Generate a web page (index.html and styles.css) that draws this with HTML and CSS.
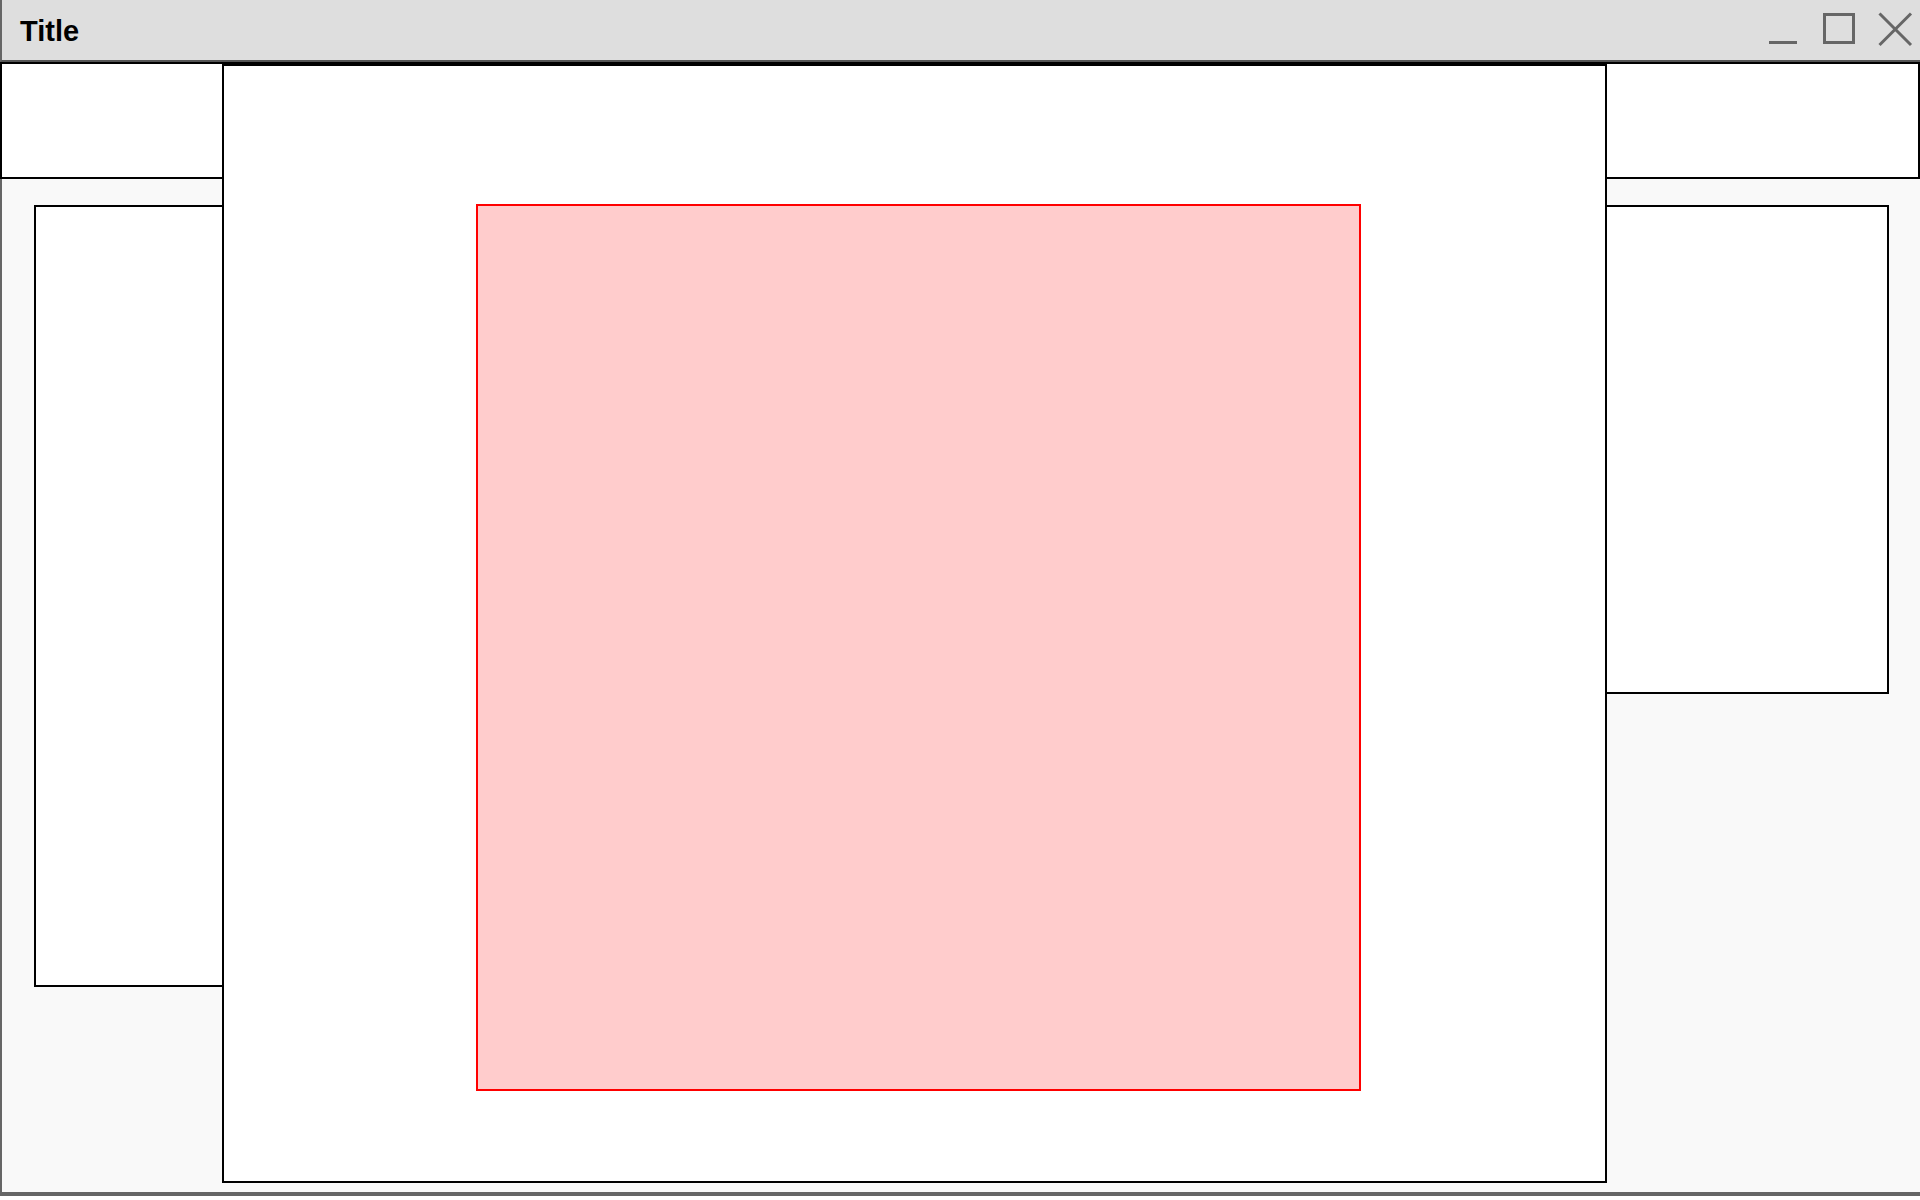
FILE: index.html
```html
<!DOCTYPE html>
<html lang="en">
<head>
<meta charset="utf-8">
<title>Title</title>
<link rel="stylesheet" href="styles.css">
</head>
<body>
<div class="window">
  <div class="titlebar">
    <span class="title">Title</span>
    <svg class="controls" width="160" height="60" viewBox="0 0 160 60" aria-hidden="true">
      <rect x="9" y="42" width="28" height="3" fill="#666"/>
      <rect x="64.5" y="15.5" width="29" height="28" fill="none" stroke="#666" stroke-width="3"/>
      <line x1="119.5" y1="14.5" x2="151" y2="46" stroke="#666" stroke-width="3"/>
      <line x1="151" y1="14.5" x2="119.5" y2="46" stroke="#666" stroke-width="3"/>
    </svg>
  </div>
  <div class="header"></div>
  <div class="content">
    <div class="panel panel-left"></div>
    <div class="center"></div>
    <div class="panel panel-right"></div>
  </div>
  <div class="modal">
    <div class="modal-box"></div>
  </div>
</div>
</body>
</html>
```

FILE: styles.css
```css
html, body {
  margin: 0;
  padding: 0;
  background: #ffffff;
}

body {
  width: 1920px;
  height: 1200px;
  overflow: hidden;
  font-family: "Liberation Sans", Arial, sans-serif;
}

.window {
  position: relative;
  width: 1920px;
  height: 1196px;
  box-sizing: border-box;
  border-bottom: 4px solid #666666;
  display: flex;
  flex-direction: column;
  background: #f9f9f9;
}

.titlebar {
  height: 62px;
  box-sizing: border-box;
  background: #dedede;
  border-left: 2px solid #666666;
  border-bottom: 2px solid #555555;
  display: flex;
  align-items: center;
  justify-content: space-between;
  flex: none;
}

.title {
  font-size: 29px;
  font-weight: bold;
  color: #000;
  padding-left: 18px;
  line-height: 1;
  margin-top: 3px;
}

.controls {
  display: block;
  flex: none;
  margin-top: -2px;
}

.header {
  height: 117px;
  box-sizing: border-box;
  background: #ffffff;
  border: 2px solid #000000;
  flex: none;
}

.content {
  flex: 1;
  border-left: 2px solid #666666;
  padding: 26px 31px 0 32px;
  display: grid;
  grid-template-columns: 380px 1fr 370px;
  align-items: start;
}

.panel {
  background: #ffffff;
  border: 2px solid #000000;
  box-sizing: border-box;
}

.panel-left {
  height: 782px;
}

.panel-right {
  height: 489px;
}

.modal {
  position: absolute;
  left: 222px;
  top: 64px;
  width: 1385px;
  height: 1119px;
  box-sizing: border-box;
  background: #ffffff;
  border: 2px solid #000000;
  padding: 138px 0 0 252px;
}

.modal-box {
  width: 885px;
  height: 887px;
  box-sizing: border-box;
  background: #ffcccc;
  border: 2px solid #ff0000;
}
```
